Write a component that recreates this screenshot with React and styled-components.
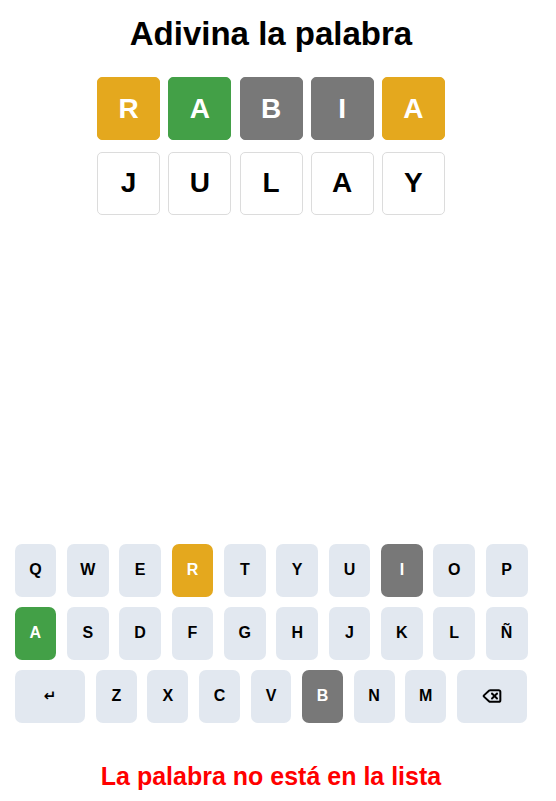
import React from "react";
import styled, { createGlobalStyle } from "styled-components";

const GlobalStyle = createGlobalStyle`
  html, body { margin: 0; padding: 0; background: #ffffff; }
  body { font-family: "Liberation Sans", Arial, sans-serif; color: #000; }
`;

const COLORS = {
  present: "#e4a81e",
  correct: "#43a047",
  absent: "#787878",
  key: "#e2e8f0",
};

const Page = styled.main`
  width: 542px;
  height: 801px;
  box-sizing: border-box;
  display: flex;
  flex-direction: column;
  align-items: center;
  padding: 14.6px 0 10px;
`;

const Title = styled.h1`
  margin: 0;
  font-size: 33px;
  line-height: 38px;
  font-weight: 700;
  color: #000;
`;

const Board = styled.div`
  margin-top: 24.7px;
  display: flex;
  flex-direction: column;
  gap: 11.6px;
`;

const BoardRow = styled.div`
  display: flex;
  gap: 8.2px;
`;

const Tile = styled.div`
  width: 63px;
  height: 63px;
  box-sizing: border-box;
  border-radius: 5px;
  display: flex;
  align-items: center;
  justify-content: center;
  font-size: 28px;
  font-weight: 700;
  background: ${(p) => (p.$state ? COLORS[p.$state] : "#ffffff")};
  color: ${(p) => (p.$state ? "#ffffff" : "#000000")};
  border: 1px solid ${(p) => (p.$state ? COLORS[p.$state] : "#dcdcdc")};
`;

const Keyboard = styled.div`
  margin-top: auto;
  width: 513px;
  display: flex;
  flex-direction: column;
  gap: 10.4px;
`;

const KeyRow = styled.div`
  display: flex;
  gap: 10.6px;
`;

const Key = styled.button`
  flex: ${(p) => (p.$wide ? 1.73 : 1)} 1 0;
  min-width: 0;
  height: 52.5px;
  border: none;
  padding: 0;
  border-radius: 7px;
  display: flex;
  align-items: center;
  justify-content: center;
  font-family: "Liberation Sans", Arial, sans-serif;
  font-size: 16px;
  font-weight: 700;
  background: ${(p) => (p.$state ? COLORS[p.$state] : COLORS.key)};
  color: ${(p) => (p.$state ? "#ffffff" : "#000000")};
`;

const EnterGlyph = styled.span`
  font-family: "DejaVu Sans", sans-serif;
  font-size: 15px;
  font-weight: 700;
`;

const Message = styled.p`
  margin: 39.5px 0 0;
  font-size: 25px;
  line-height: 29px;
  font-weight: 700;
  color: #ff0000;
`;

const BackspaceIcon = () => (
  <svg width="20" height="20" viewBox="0 0 24 24" fill="none" stroke="#000" strokeWidth="2.4" strokeLinecap="round" strokeLinejoin="round">
    <path d="M10 5a2 2 0 0 0-1.344.519l-6.328 5.74a1 1 0 0 0 0 1.481l6.328 5.741A2 2 0 0 0 10 19h10a2 2 0 0 0 2-2V7a2 2 0 0 0-2-2z" />
    <path d="m12 9 6 6" />
    <path d="m18 9-6 6" />
  </svg>
);

const guesses = [
  [
    ["R", "present"],
    ["A", "correct"],
    ["B", "absent"],
    ["I", "absent"],
    ["A", "present"],
  ],
  [
    ["J", null],
    ["U", null],
    ["L", null],
    ["A", null],
    ["Y", null],
  ],
];

const keyStates = { R: "present", A: "correct", I: "absent", B: "absent" };

const rows = [
  ["Q", "W", "E", "R", "T", "Y", "U", "I", "O", "P"],
  ["A", "S", "D", "F", "G", "H", "J", "K", "L", "Ñ"],
  ["ENTER", "Z", "X", "C", "V", "B", "N", "M", "BACK"],
];

export default function App() {
  return (
    <>
      <GlobalStyle />
      <Page>
        <Title>Adivina la palabra</Title>
        <Board>
          {guesses.map((row, i) => (
            <BoardRow key={i}>
              {row.map(([l, s], j) => (
                <Tile key={j} $state={s}>
                  {l}
                </Tile>
              ))}
            </BoardRow>
          ))}
        </Board>
        <Keyboard>
          {rows.map((row, i) => (
            <KeyRow key={i}>
              {row.map((k) => {
                if (k === "ENTER")
                  return (
                    <Key key={k} $wide>
                      <EnterGlyph>↵</EnterGlyph>
                    </Key>
                  );
                if (k === "BACK")
                  return (
                    <Key key={k} $wide>
                      <BackspaceIcon />
                    </Key>
                  );
                return (
                  <Key key={k} $state={keyStates[k]}>
                    {k}
                  </Key>
                );
              })}
            </KeyRow>
          ))}
        </Keyboard>
        <Message>La palabra no está en la lista</Message>
      </Page>
    </>
  );
}
